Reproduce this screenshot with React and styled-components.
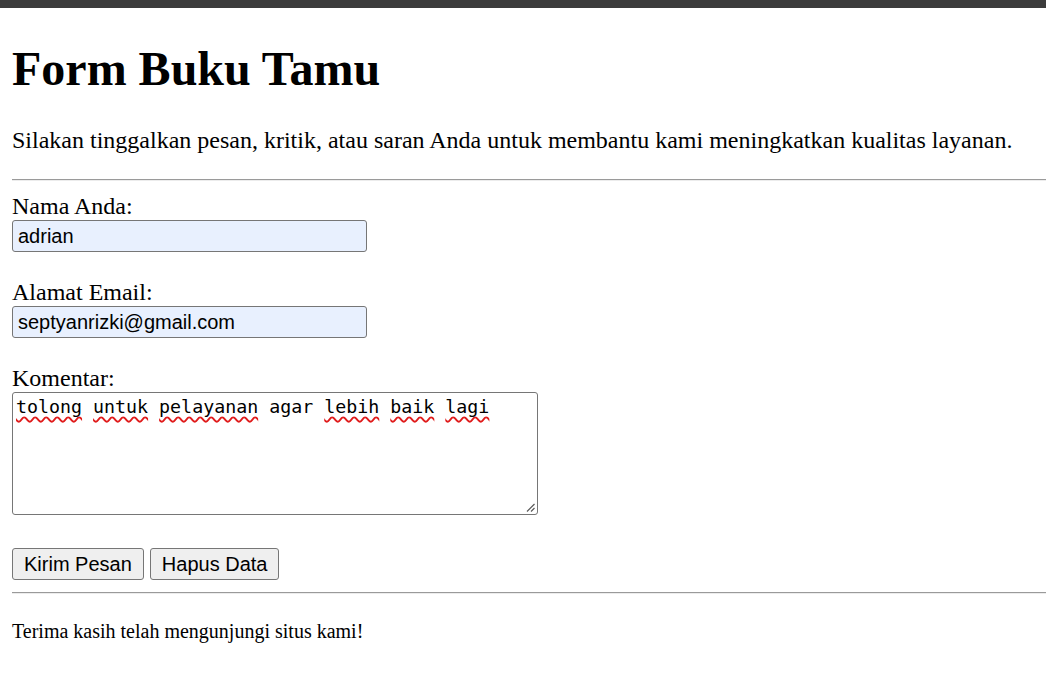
import React from "react";
import styled, { createGlobalStyle } from "styled-components";

const GlobalStyle = createGlobalStyle`
  html, body {
    margin: 0;
    padding: 0;
    background: #ffffff;
    color: #000000;
    font-family: "Liberation Serif", "Times New Roman", serif;
  }
`;

const TopBar = styled.div`
  height: 8px;
  background: #3c3c3c;
`;

const Page = styled.main`
  padding-left: 12px;
`;

const Title = styled.h1`
  font-size: 48px;
  font-weight: bold;
  line-height: normal;
  margin: 33px 0 31px;
`;

const Text = styled.p`
  font-size: ${(p) => (p.$small ? "20px" : "24px")};
  line-height: 27.6px;
  margin: 24px 0;
`;

const Rule = styled.hr`
  height: 0;
  margin: 12px 0;
  border: none;
  border-top: 1px solid #9a9a9a;
  border-bottom: 1px solid #ececec;
`;

const Form = styled.form`
  margin: 0;
`;

const Field = styled.div`
  margin-bottom: ${(p) => p.$gap || "26.5px"};
`;

const Label = styled.label`
  display: block;
  font-size: 24px;
  line-height: 27.6px;
`;

const Input = styled.input`
  display: block;
  box-sizing: border-box;
  width: 355px;
  height: 32px;
  margin: 0;
  padding: 0 5px;
  border: 1px solid #767676;
  border-radius: 3px;
  background: #e8f0fe;
  color: #000;
  font-family: "Liberation Sans", Arial, sans-serif;
  font-size: 20px;
  outline: none;
`;

const TextBox = styled.div`
  position: relative;
  box-sizing: border-box;
  width: 526px;
  height: 123px;
  padding: 3px;
  border: 1px solid #767676;
  border-radius: 3px;
  background: #fff;
  font-family: "DejaVu Sans Mono", "Liberation Mono", monospace;
  font-size: 18.3px;
  line-height: 21.3px;
  white-space: pre-wrap;
`;

const Typo = styled.span`
  text-decoration: underline wavy #e01b1b;
  text-decoration-thickness: 1.6px;
  text-decoration-skip-ink: none;
  text-underline-offset: 3px;
`;

const Grip = styled.svg`
  position: absolute;
  right: 2px;
  bottom: 2px;
  width: 10px;
  height: 10px;
`;

const Actions = styled.div`
  display: flex;
  gap: 6px;
`;

const Button = styled.button`
  box-sizing: border-box;
  height: 32px;
  margin: 0;
  padding: 0 11px;
  border: 1px solid #767676;
  border-radius: 3px;
  background: #efefef;
  color: #000;
  font-family: "Liberation Sans", Arial, sans-serif;
  font-size: 20px;
  line-height: 23px;
`;

const words = ["tolong", "untuk", "pelayanan", "agar", "lebih", "baik", "lagi"];
const correct = ["agar"];

export default function App() {
  return (
    <>
      <GlobalStyle />
      <TopBar />
      <Page>
        <Title>Form Buku Tamu</Title>
        <Text>
          Silakan tinggalkan pesan, kritik, atau saran Anda untuk membantu kami
          meningkatkan kualitas layanan.
        </Text>
        <Rule />
        <Form onSubmit={(e) => e.preventDefault()}>
          <Field>
            <Label htmlFor="nama">Nama Anda:</Label>
            <Input id="nama" type="text" defaultValue="adrian" />
          </Field>
          <Field>
            <Label htmlFor="email">Alamat Email:</Label>
            <Input id="email" type="email" defaultValue="septyanrizki@gmail.com" />
          </Field>
          <Field $gap="33px">
            <Label>Komentar:</Label>
            <TextBox>
              {words.map((w, i) => (
                <React.Fragment key={w}>
                  {correct.includes(w) ? w : <Typo>{w}</Typo>}
                  {i < words.length - 1 ? " " : ""}
                </React.Fragment>
              ))}
              <Grip viewBox="0 0 10 10">
                <path d="M9.5 2 L2 9.5 M9.5 6 L6 9.5" stroke="#5a5a5a" strokeWidth="1.2" fill="none" />
              </Grip>
            </TextBox>
          </Field>
          <Actions>
            <Button type="submit">Kirim Pesan</Button>
            <Button type="reset">Hapus Data</Button>
          </Actions>
        </Form>
        <Rule />
        <Text $small>Terima kasih telah mengunjungi situs kami!</Text>
      </Page>
    </>
  );
}
